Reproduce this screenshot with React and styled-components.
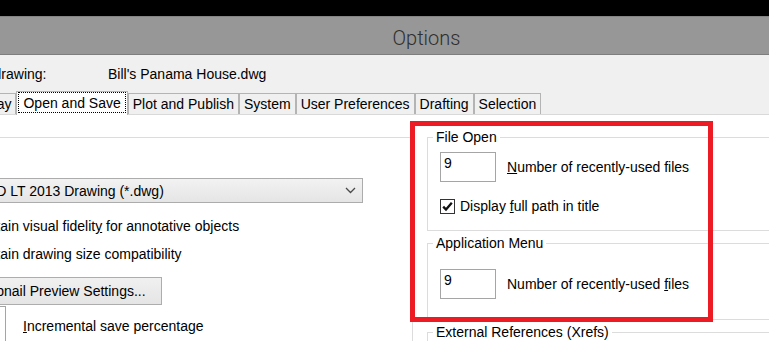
import React from "react";
import styled, { createGlobalStyle } from "styled-components";

const GlobalStyle = createGlobalStyle`
  html, body {
    margin: 0;
    padding: 0;
    background: #000;
    overflow: hidden;
  }
  body {
    font-family: "Liberation Sans", Arial, sans-serif;
    font-size: 14px;
    color: #000;
  }
`;

const Screen = styled.div`
  width: 769px;
  height: 341px;
  overflow: hidden;
  background: #000;
  padding-top: 16px;
  box-sizing: border-box;
`;

const Window = styled.div`
  position: relative;
  width: 1033px;
  height: 325px;
  margin-left: -90px;
  background: #f0f0f0;
  display: flex;
  flex-direction: column;
  overflow: hidden;
`;

const TitleBar = styled.div`
  flex-shrink: 0;
  height: 39px;
  box-sizing: border-box;
  background: #979797;
  border-top: 1px solid #848484;
  border-bottom: 1px solid #7e7e7e;
  display: flex;
  align-items: center;
  justify-content: center;
  padding-top: 4px;
  font-family: Roboto, "Liberation Sans", sans-serif;
  font-weight: 300;
  font-size: 20px;
  color: #2f2f2f;
`;

const InfoRow = styled.div`
  flex-shrink: 0;
  display: flex;
  height: 36px;
  box-sizing: border-box;
  padding: 11px 0 0 33px;
  line-height: 16px;
`;

const InfoLabel = styled.span`
  width: 165px;
`;

const TabStrip = styled.div`
  flex-shrink: 0;
  display: flex;
  align-items: flex-end;
  height: 23px;
  padding-left: 11px;
`;

const Tab = styled.div`
  height: 21px;
  box-sizing: border-box;
  padding: 0 4px;
  border: 1px solid #b4b4b4;
  border-bottom: none;
  background: #f0f0f0;
  line-height: 20px;
  white-space: nowrap;
`;

const ActiveTab = styled.div`
  position: relative;
  z-index: 1;
  height: 24px;
  margin-bottom: -1px;
  box-sizing: border-box;
  padding: 0 1px;
  border: 1px solid #b4b4b4;
  border-bottom: none;
  background: #fff;
  white-space: nowrap;
`;

const FocusText = styled.span`
  display: block;
  padding: 2px 4px 1px;
  border: 1px dotted #000;
  line-height: 16px;
`;

const Panel = styled.div`
  flex: 1;
  min-height: 0;
  display: flex;
  align-items: flex-start;
  background: #fff;
  border-top: 1px solid #d9d9d9;
  padding: 14px 0 0 20px;
`;

const Group = styled.fieldset`
  flex-shrink: 0;
  margin: ${(p) => p.$mt || 0}px 0 0;
  padding: 0 0 ${(p) => p.$pb || 0}px;
  width: ${(p) => p.$w}px;
  min-width: 0;
  box-sizing: border-box;
  border: 1px solid #dcdcdc;
`;

const Legend = styled.legend`
  margin-left: 5px;
  padding: 0 3px;
  line-height: 16px;
  font-size: 14px;
`;

const GroupBody = styled.div`
  padding-left: 12px;
  display: flex;
  flex-direction: column;
  align-items: flex-start;
`;

const RightColumn = styled.div`
  flex-shrink: 0;
  display: flex;
  flex-direction: column;
  margin-left: 14px;
`;

const Row = styled.div`
  flex-shrink: 0;
  display: flex;
  align-items: center;
  margin-top: ${(p) => p.$mt || 0}px;
  margin-left: ${(p) => p.$ml || 0}px;
  height: ${(p) => p.$h || 16}px;
  line-height: 16px;
  white-space: nowrap;
`;

const NumberBox = styled.input`
  flex-shrink: 0;
  width: 56px;
  height: ${(p) => p.$h || 30}px;
  box-sizing: border-box;
  margin: 0;
  padding: 2px 3px ${(p) => (p.$h || 30) - 20}px;
  border: 1px solid #a5a5a5;
  background: #fff;
  font-family: "Liberation Sans", Arial, sans-serif;
  font-size: 14px;
  line-height: 16px;
  color: #000;
  text-align: left;
  outline: none;
`;

const FieldLabel = styled.span`
  margin-left: ${(p) => p.$gap || 11}px;
`;

const CheckBox = styled.span`
  width: 15px;
  height: 15px;
  box-sizing: border-box;
  border: 1px solid #333;
  background: #fff;
  display: flex;
  align-items: center;
  justify-content: center;
  margin-right: 5px;
  flex-shrink: 0;
`;

const Select = styled.div`
  flex-shrink: 0;
  margin-top: 33px;
  width: 420px;
  height: 25px;
  box-sizing: border-box;
  border: 1px solid #acacac;
  background: linear-gradient(#f2f2f2, #e5e5e5);
  display: flex;
  align-items: center;
  justify-content: space-between;
  padding: 0 6px 0 4px;
  white-space: nowrap;
`;

const Button = styled.div`
  flex-shrink: 0;
  margin-top: 15px;
  margin-left: 1px;
  width: 218px;
  height: 28px;
  box-sizing: border-box;
  border: 1px solid #adadad;
  background: linear-gradient(#f0f0f0, #e5e5e5);
  display: flex;
  align-items: center;
  justify-content: center;
  white-space: nowrap;
`;

const Highlight = styled.div`
  position: absolute;
  left: 500px;
  top: 105px;
  width: 303px;
  height: 201px;
  box-sizing: border-box;
  border: 5px solid #ed1c24;
  pointer-events: none;
`;

const Check = () => (
  <svg width="13" height="13" viewBox="0 0 13 13">
    <path d="M2.2 6.6 L5 9.6 L10.8 2.8" fill="none" stroke="#111" strokeWidth="2.3" />
  </svg>
);

const Chevron = () => (
  <svg width="11" height="7" viewBox="0 0 11 7">
    <path d="M1 1 L5.5 5.5 L10 1" fill="none" stroke="#4a4a4a" strokeWidth="1.3" />
  </svg>
);

const TABS = ["Files", "Display", "Open and Save", "Plot and Publish", "System", "User Preferences", "Drafting", "Selection"];

export default function App() {
  return (
    <Screen>
      <GlobalStyle />
      <Window>
        <TitleBar>Options</TitleBar>
        <InfoRow>
          <InfoLabel>Current drawing:</InfoLabel>
          <span>Bill's Panama House.dwg</span>
        </InfoRow>
        <TabStrip>
          {TABS.map((t) =>
            t === "Open and Save" ? (
              <ActiveTab key={t}>
                <FocusText>{t}</FocusText>
              </ActiveTab>
            ) : (
              <Tab key={t}>{t}</Tab>
            )
          )}
        </TabStrip>
        <Panel>
          <Group $w={483} $pb={60}>
            <Legend>File Save</Legend>
            <GroupBody>
              <Select>
                <span>AutoCAD LT 2013 Drawing (*.dwg)</span>
                <Chevron />
              </Select>
              <Row $mt={15} $ml={3}>
                <CheckBox />
                <span>
                  Maintain visual fidelit<u>y</u> for annotative objects
                </span>
              </Row>
              <Row $mt={12} $ml={3}>
                <CheckBox />
                <span>
                  Maintain drawin<u>g</u> size compatibility
                </span>
              </Row>
              <Button>Thumbnail Preview Settings...</Button>
              <Row $mt={8} $ml={7} $h={26}>
                <NumberBox readOnly value="50" $h={40} />
                <FieldLabel $gap={17}>
                  <u>I</u>ncremental save percentage
                </FieldLabel>
              </Row>
            </GroupBody>
          </Group>
          <RightColumn>
            <Group $w={400} $pb={16}>
              <Legend>File Open</Legend>
              <GroupBody>
                <Row $mt={7} $h={30}>
                  <NumberBox readOnly value="9" />
                  <FieldLabel>
                    <u>N</u>umber of recently-used files
                  </FieldLabel>
                </Row>
                <Row $mt={16}>
                  <CheckBox>
                    <Check />
                  </CheckBox>
                  <span>
                    Display <u>f</u>ull path in title
                  </span>
                </Row>
              </GroupBody>
            </Group>
            <Group $w={400} $mt={4} $pb={20}>
              <Legend>Application Menu</Legend>
              <GroupBody>
                <Row $mt={18} $h={30}>
                  <NumberBox readOnly value="9" />
                  <FieldLabel>
                    Number of recently-used <u>f</u>iles
                  </FieldLabel>
                </Row>
              </GroupBody>
            </Group>
            <Group $w={400} $mt={4} $pb={40}>
              <Legend>External References (Xrefs)</Legend>
              <GroupBody>
                <Row $mt={10}>
                  <span>Demand load Xrefs:</span>
                </Row>
              </GroupBody>
            </Group>
          </RightColumn>
        </Panel>
        <Highlight />
      </Window>
    </Screen>
  );
}
